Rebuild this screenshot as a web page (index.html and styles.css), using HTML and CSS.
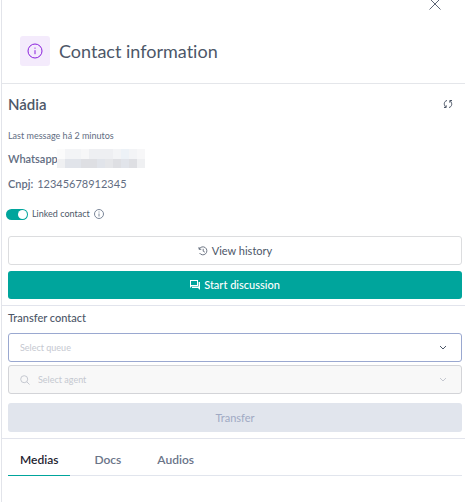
FILE: index.html
```html
<!DOCTYPE html>
<html lang="en">
<head>
<meta charset="utf-8">
<meta name="viewport" content="width=device-width, initial-scale=1">
<title>Contact information</title>
<link rel="stylesheet" href="styles.css">
</head>
<body>
<aside class="panel">
  <header class="header">
    <button class="icon-button close" type="button" aria-label="Close">
      <svg width="14" height="14" viewBox="0 0 14 14"><path d="M1.500 1.500l11 11M12.500 1.500l-11 11"/></svg>
    </button>
    <div class="heading">
      <span class="badge">
        <svg width="16" height="16" viewBox="0 0 16 16"><circle cx="8" cy="8" r="7"/><path d="M8 7.200v4M8 4.600v1.100"/></svg>
      </span>
      <h1 class="title">Contact information</h1>
    </div>
  </header>

  <section class="section contact">
    <div class="name-row">
      <h2 class="name">Nádia</h2>
      <button class="icon-button sync" type="button" aria-label="Refresh">
        <svg width="10" height="10" viewBox="0 0 10 10"><path d="M4 1.500C.8 2.200.5 6 2.700 8M1 8.500h2.200V6.300M6 8.500C9.200 7.800 9.500 4 7.300 2M9 1.500H6.800v2.200"/></svg>
      </button>
    </div>
    <p class="last-message">Last message há 2 minutos</p>
    <dl class="details">
      <div class="detail">
        <dt>Whatsapp:</dt>
        <dd class="masked">
          <svg width="88" height="19" viewBox="0 0 88 19" shape-rendering="crispEdges">
            <path fill="#fbfbfb" d="M0 0h8v10H0z"/><path fill="#f3f4f6" d="M8 0h16v10H8zM56 0h8v10h-8zM72 0h8v10h-8z"/><path fill="#f7f7f8" d="M24 0h8v10h-8zM80 0h8v10h-8z"/><path fill="#eeeff2" d="M32 0h24v10H32z"/><path fill="#edf2f7" d="M64 0h8v10h-8z"/>
            <path fill="#eff0f2" d="M0 10h8v9H0zM80 10h8v9h-8z"/><path fill="#e1e4ea" d="M8 10h16v9H8zM40 10h8v9h-8zM64 10h8v9h-8z"/><path fill="#dedfe3" d="M24 10h16v9H24zM56 10h8v9h-8zM72 10h8v9h-8z"/><path fill="#e5e6e9" d="M48 10h8v9h-8z"/>
          </svg>
        </dd>
      </div>
      <div class="detail">
        <dt>Cnpj:</dt>
        <dd>12345678912345</dd>
      </div>
    </dl>
    <div class="linked">
      <input class="switch" type="checkbox" role="switch" id="linked" checked>
      <label for="linked">Linked contact</label>
      <svg class="hint" width="10" height="10" viewBox="0 0 10 10"><circle cx="5" cy="5" r="4.500"/><path d="M5 4.500v3M5 2.500v1"/></svg>
    </div>
    <div class="actions">
      <button class="button outline" type="button">
        <svg width="10" height="10" viewBox="0 0 10 10" stroke-width=".8"><path d="M1.300 3A4 4 0 1 1 1.500 7M1 1v2.300h2.300M5.200 2.800v2.400l1.700 1"/></svg>
        View history
      </button>
      <button class="button primary" type="button">
        <svg class="solid" width="10" height="10" viewBox="0 0 10 10"><path fill-rule="evenodd" d="M0 0h8v6H2L0 8zM1 1v4h6V1z"/><path d="M8.600 2H10v8L8 8H2V6.600h6.600z"/></svg>
        Start discussion
      </button>
    </div>
  </section>

  <section class="section transfer">
    <h3 class="label">Transfer contact</h3>
    <div class="field">
      <select aria-label="Select queue"><option>Select queue</option></select>
      <svg class="chevron" width="8" height="6" viewBox="0 0 8 6"><path d="M1 1l3 3 3-3"/></svg>
    </div>
    <div class="field disabled">
      <svg class="search" width="10" height="10" viewBox="0 0 10 10"><circle cx="4.200" cy="4.200" r="3.500"/><path d="M6.800 6.800L9.500 9.500"/></svg>
      <select aria-label="Select agent" disabled><option>Select agent</option></select>
      <svg class="chevron" width="8" height="6" viewBox="0 0 8 6"><path d="M1 1l3 3 3-3"/></svg>
    </div>
    <button class="button muted" type="button" disabled>Transfer</button>
  </section>

  <nav class="tabs" role="tablist">
    <button class="tab active" type="button" role="tab" aria-selected="true">Medias</button>
    <button class="tab" type="button" role="tab" aria-selected="false">Docs</button>
    <button class="tab" type="button" role="tab" aria-selected="false">Audios</button>
  </nav>
</aside>
</body>
</html>
```
FILE: styles.css
```css
* {
  box-sizing: border-box;
}

body {
  margin: 0;
  background: #fff;
  color: #4d5768;
  font-family: Lato, "Liberation Sans", sans-serif;
  font-size: 11px;
  font-variant-ligatures: none;
  line-height: 16px;
}

h1, h2, h3, p, dl, dd {
  margin: 0;
}

button, select {
  font: inherit;
  font-variant-ligatures: none;
  color: inherit;
}

svg {
  display: block;
  flex: none;
  fill: none;
  stroke: currentColor;
}

.panel {
  min-height: 100vh;
  margin-left: 1px;
  border-left: 1px solid #e2e4ea;
}

.header {
  display: flex;
  flex-direction: column;
  border-bottom: 1px solid #e4e6ea;
  padding-bottom: 17px;
}

.icon-button {
  display: flex;
  padding: 0;
  border: 0;
  background: none;
  cursor: pointer;
}

.close {
  align-self: flex-end;
  height: 36px;
  margin: -3px 23px 3px 0;
  color: #5c6576;
}

.heading {
  display: flex;
  align-items: center;
  gap: 9px;
  padding-left: 18px;
}

.badge {
  display: grid;
  place-items: center;
  width: 30px;
  height: 30px;
  border-radius: 3px;
  background: #f4ebfc;
  color: #8a1fdc;
}

.title {
  font-size: 18px;
  font-weight: 400;
  line-height: 24px;
}

.section {
  padding: 0 3px 6px 6px;
  border-bottom: 1px solid #e2e4ec;
}

.name-row {
  display: flex;
  align-items: center;
  justify-content: space-between;
  padding: 10px 9px 0 0;
}

.name {
  font-size: 15px;
  font-weight: 600;
  line-height: 20px;
}

.last-message {
  margin-top: 14px;
  color: #626d82;
  font-size: 9px;
}

.details {
  margin-top: 5px;
  color: #626d82;
}

.detail {
  display: flex;
  align-items: center;
  height: 19px;
  margin-bottom: 6px;
}

.detail dt {
  font-weight: 600;
}

.detail dd {
  margin-left: 4px;
}

.detail .masked {
  margin-left: -4px;
}

.masked svg,
.solid {
  stroke: none;
}

.solid {
  fill: currentColor;
}

.linked {
  display: flex;
  align-items: center;
  gap: 4px;
  margin: 13px 0 0 -2px;
  font-size: 9px;
}

.switch {
  appearance: none;
  display: flex;
  width: 22px;
  height: 11px;
  margin: 0;
  padding: 1px;
  border-radius: 6px;
  background: #00a59c;
}

.switch::before {
  content: "";
  width: 9px;
  height: 9px;
  margin-left: auto;
  border-radius: 50%;
  background: #fff;
}

.hint {
  color: #7a8698;
}

.actions {
  display: grid;
  gap: 6px;
  margin-top: 14px;
}

.button {
  display: flex;
  align-items: center;
  justify-content: center;
  gap: 4px;
  width: 100%;
  height: 29px;
  padding: 0;
  border: 1px solid transparent;
  border-radius: 3px;
}

.outline {
  border-color: #dcdddf;
  background: #fff;
}

.primary {
  height: 28px;
  background: #00a59c;
  color: #fff;
  font-weight: 500;
}

.muted {
  margin-top: 9px;
  background: #e1e5ed;
  color: #a0aac4;
}

.label {
  padding: 4px 0 7px;
  font-size: 11px;
  font-weight: 500;
}

.field {
  display: flex;
  align-items: center;
  height: 29px;
  padding: 0 14px 0 11px;
  border: 1px solid #9aa8d0;
  border-radius: 3px;
}

.field select {
  appearance: none;
  flex: 1;
  min-width: 0;
  padding: 0;
  border: 0;
  background: none;
  color: #c5c8d0;
  font-size: 9px;
  opacity: 1;
}

.field.disabled {
  margin-top: 3px;
  border-color: #d3d4d8;
  background: #f8f8f8;
  color: #c5c8d0;
}

.search {
  margin-right: 8px;
}

.tabs {
  display: flex;
  gap: 12px;
  margin: 0 3px 0 6px;
  border-bottom: 1px solid #e1e5ed;
}

.tab {
  height: 37px;
  margin-bottom: -1px;
  padding: 6px 12px 0;
  border: 0;
  border-bottom: 1px solid transparent;
  background: none;
  color: #6a7488;
  font-size: 12px;
  font-weight: 600;
}

.tab.active {
  border-color: #00a59c;
  color: #1e2330;
}
```
